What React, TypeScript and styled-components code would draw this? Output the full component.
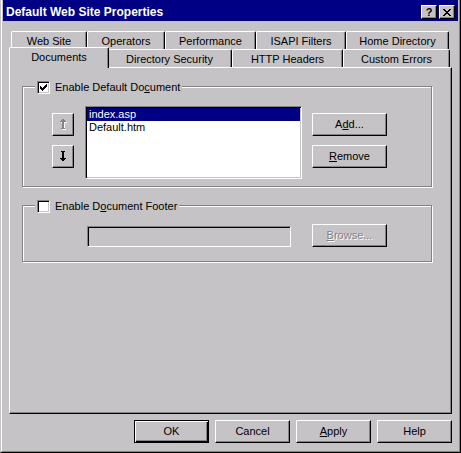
import styled, { createGlobalStyle } from 'styled-components'

const FACE = '#c6c3c6'
const SHADOW = '#848284'
const NAVY = '#000084'

const GlobalStyle = createGlobalStyle`
  html, body {
    margin: 0;
    padding: 0;
    background: ${FACE};
  }
  body {
    font-family: 'Liberation Sans', Arial, sans-serif;
    font-size: 11px;
    color: #000;
  }
`

const Window = styled.div`
  box-sizing: border-box;
  width: 461px;
  height: 453px;
  background: ${FACE};
  border-left: 1px solid ${FACE};
  border-right: 1px solid #000;
  border-bottom: 1px solid #000;
  display: flex;
`

const Frame = styled.div`
  flex: 1;
  display: flex;
  flex-direction: column;
  border-left: 1px solid #fff;
  border-right: 1px solid ${SHADOW};
  border-bottom: 1px solid ${SHADOW};
  padding: 0 1px 1px;
`

const TitleBar = styled.div`
  box-sizing: border-box;
  height: 21px;
  flex: none;
  display: flex;
  align-items: center;
  gap: 2px;
  padding: 3px 3px 0 3px;
  background: ${NAVY};
  color: #fff;
  font-weight: bold;
`

const TitleText = styled.div`
  flex: 1;
  font-size: 12px;
  line-height: 13px;
  white-space: nowrap;
`

const CaptionButton = styled.div`
  box-sizing: border-box;
  width: 16px;
  height: 14px;
  flex: none;
  display: flex;
  align-items: center;
  justify-content: center;
  background: ${FACE};
  color: #000;
  border: 1px solid;
  border-color: #fff #000 #000 #fff;
  box-shadow: inset -1px -1px 0 ${SHADOW};
  font-size: 11px;
  line-height: 12px;
`

const Body = styled.div`
  flex: 1;
  display: flex;
  flex-direction: column;
  padding: 10px 6px 0;
`

const TabRow = styled.div`
  display: flex;
  height: 18px;
  padding: 0 2px;
`

const Tab = styled.div<{ $w: number; $active?: boolean }>`
  position: relative;
  z-index: ${p => (p.$active ? 2 : 1)};
  flex: none;
  box-sizing: border-box;
  width: ${p => p.$w + (p.$active ? 4 : 0)}px;
  height: ${p => (p.$active ? 21 : 18)}px;
  margin: ${p => (p.$active ? '-2px -2px 0' : '0')};
  padding-top: 3px;
  background: ${FACE};
  border: 1px solid #fff;
  border-right-color: #000;
  border-bottom: none;
  border-radius: 2px 2px 0 0;
  box-shadow: inset -1px 0 0 ${SHADOW};
  text-align: center;
  line-height: 13px;
  white-space: nowrap;
`

const Panel = styled.div`
  box-sizing: border-box;
  height: 347px;
  flex: none;
  display: flex;
  flex-direction: column;
  align-items: flex-start;
  padding: 18px 0 0 12px;
  border: 1px solid #fff;
  border-right-color: #000;
  border-bottom-color: #000;
  box-shadow: inset -1px -1px 0 ${SHADOW};
`

const GroupBox = styled.div<{ $top?: number }>`
  box-sizing: border-box;
  width: 410px;
  margin-top: ${p => p.$top ?? 0}px;
  display: flex;
  flex-direction: column;
  align-items: flex-start;
  border: 1px solid ${SHADOW};
  box-shadow: inset 1px 1px 0 #fff, 1px 1px 0 #fff;
`

const Legend = styled.label`
  display: flex;
  align-items: center;
  gap: 5px;
  height: 13px;
  margin: -6px 0 0 12px;
  padding: 0 2px;
  background: ${FACE};
  line-height: 13px;
  white-space: nowrap;
`

const CheckBox = styled.span`
  box-sizing: border-box;
  width: 13px;
  height: 13px;
  flex: none;
  display: flex;
  align-items: center;
  justify-content: center;
  background: #fff;
  border: 1px solid;
  border-color: ${SHADOW} #fff #fff ${SHADOW};
  box-shadow: inset 1px 1px 0 #000, inset -1px -1px 0 ${FACE};
`

const DocRow = styled.div`
  display: flex;
  align-items: flex-start;
  margin-top: 12px;
  padding-bottom: 7px;
`

const ButtonColumn = styled.div<{ $left: number; $right?: number }>`
  display: flex;
  flex-direction: column;
  gap: 9px;
  margin: 7px ${p => p.$right ?? 0}px 0 ${p => p.$left}px;
`

const Sunken = styled.div<{ $w: number; $h: number; $fill: string }>`
  box-sizing: border-box;
  width: ${p => p.$w}px;
  height: ${p => p.$h}px;
  flex: none;
  background: ${p => p.$fill};
  border: 1px solid;
  border-color: ${SHADOW} #fff #fff ${SHADOW};
  box-shadow: inset 1px 1px 0 #000, inset -1px -1px 0 ${FACE};
  padding: 1px;
`

const ListItem = styled.div<{ $selected?: boolean }>`
  height: 13px;
  line-height: 13px;
  padding-left: 2px;
  background: ${p => (p.$selected ? NAVY : 'transparent')};
  color: ${p => (p.$selected ? '#fff' : '#000')};
  white-space: nowrap;
`

const Button = styled.div<{ $w?: number; $default?: boolean; $disabled?: boolean }>`
  box-sizing: border-box;
  width: ${p => p.$w ?? 75}px;
  height: 23px;
  flex: none;
  display: flex;
  align-items: center;
  justify-content: center;
  background: ${FACE};
  line-height: 13px;
  white-space: nowrap;
  border: 1px solid;
  border-color: ${p => (p.$default ? '#000' : '#fff #000 #000 #fff')};
  box-shadow: ${p =>
    p.$default
      ? `inset 1px 1px 0 #fff, inset -1px -1px 0 #000, inset -2px -2px 0 ${SHADOW}`
      : `inset -1px -1px 0 ${SHADOW}`};
  color: ${p => (p.$disabled ? SHADOW : '#000')};
  text-shadow: ${p => (p.$disabled ? '1px 1px 0 #fff' : 'none')};
`

const FooterRow = styled.div`
  display: flex;
  align-items: flex-start;
  margin-top: 11px;
  padding-bottom: 14px;
`

const FooterField = styled(Sunken)`
  margin: 2px 21px 0 64px;
`

const DialogButtons = styled.div`
  display: flex;
  justify-content: flex-end;
  gap: 6px;
  margin-top: 6px;
`

const CloseGlyph = () => (
  <svg width="8" height="7" viewBox="0 0 8 7" shapeRendering="crispEdges">
    <path
      d="M0 0h2v1H0zM6 0h2v1H6zM1 1h2v1H1zM5 1h2v1H5zM2 2h4v1H2zM3 3h2v1H3zM2 4h4v1H2zM1 5h2v1H1zM5 5h2v1H5zM0 6h2v1H0zM6 6h2v1H6z"
      fill="#000"
    />
  </svg>
)

const CheckMark = () => (
  <svg width="7" height="7" viewBox="0 0 7 7" shapeRendering="crispEdges">
    <path d="M6 0h1v3H6zM5 1h1v3H5zM4 2h1v3H4zM3 3h1v3H3zM2 4h1v3H2zM1 3h1v3H1zM0 2h1v3H0z" fill="#000" />
  </svg>
)

// bar-and-arrow glyph used on the move up / move down buttons
const MoveArrow = ({ up, disabled }: { up?: boolean; disabled?: boolean }) => {
  const d = 'M1 0h4v1H1zM2 0h2v7H2zM0 7h6v1H0zM1 8h4v1H1zM2 9h2v1H2z'
  const flip = up ? 'translate(0 10) scale(1 -1)' : undefined
  return (
    <svg width="7" height="11" viewBox="0 0 7 11" shapeRendering="crispEdges">
      {disabled && (
        <g transform="translate(1 1)">
          <path d={d} fill="#fff" transform={flip} />
        </g>
      )}
      <path d={d} fill={disabled ? SHADOW : '#000'} transform={flip} />
    </svg>
  )
}

const backTabs: [string, number][] = [
  ['Web Site', 76],
  ['Operators', 78],
  ['Performance', 91],
  ['ISAPI Filters', 90],
  ['Home Directory', 103],
]

const frontTabs: [string, number][] = [
  ['Documents', 96],
  ['Directory Security', 125],
  ['HTTP Headers', 111],
  ['Custom Errors', 107],
]

const documents = ['index.asp', 'Default.htm']

export default function App() {
  return (
    <>
      <GlobalStyle />
      <Window>
        <Frame>
          <TitleBar>
            <TitleText>Default Web Site Properties</TitleText>
            <CaptionButton>?</CaptionButton>
            <CaptionButton>
              <CloseGlyph />
            </CaptionButton>
          </TitleBar>
          <Body>
            <TabRow>
              {backTabs.map(([label, w]) => (
                <Tab key={label} $w={w}>
                  {label}
                </Tab>
              ))}
            </TabRow>
            <TabRow>
              {frontTabs.map(([label, w], i) => (
                <Tab key={label} $w={w} $active={i === 0}>
                  {label}
                </Tab>
              ))}
            </TabRow>
            <Panel>
              <GroupBox>
                <Legend>
                  <CheckBox>
                    <CheckMark />
                  </CheckBox>
                  <span>
                    Enable Default Do<u>c</u>ument
                  </span>
                </Legend>
                <DocRow>
                  <ButtonColumn $left={29} $right={11}>
                    <Button $w={22}>
                      <MoveArrow up disabled />
                    </Button>
                    <Button $w={22}>
                      <MoveArrow />
                    </Button>
                  </ButtonColumn>
                  <Sunken $w={217} $h={73} $fill="#fff">
                    {documents.map((doc, i) => (
                      <ListItem key={doc} $selected={i === 0}>
                        {doc}
                      </ListItem>
                    ))}
                  </Sunken>
                  <ButtonColumn $left={10}>
                    <Button>
                      A<u>d</u>d...
                    </Button>
                    <Button>
                      <u>R</u>emove
                    </Button>
                  </ButtonColumn>
                </DocRow>
              </GroupBox>
              <GroupBox $top={18}>
                <Legend>
                  <CheckBox />
                  <span>
                    Enable D<u>o</u>cument Footer
                  </span>
                </Legend>
                <FooterRow>
                  <FooterField $w={204} $h={21} $fill={FACE} />
                  <Button $disabled>
                    <span>
                      <u>B</u>rowse...
                    </span>
                  </Button>
                </FooterRow>
              </GroupBox>
            </Panel>
            <DialogButtons>
              <Button $default>OK</Button>
              <Button>Cancel</Button>
              <Button>
                <span>
                  <u>A</u>pply
                </span>
              </Button>
              <Button>Help</Button>
            </DialogButtons>
          </Body>
        </Frame>
      </Window>
    </>
  )
}
